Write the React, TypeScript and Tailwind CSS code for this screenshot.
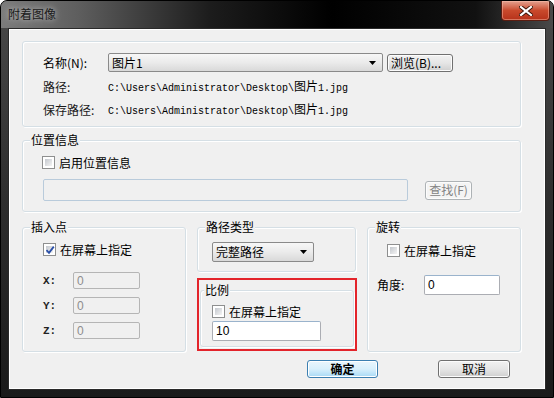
import React from 'react';

const CJK = '"Noto Sans CJK SC", "Liberation Sans", sans-serif';

const GroupBox: React.FC<{
  title?: string;
  className?: string;
  titleLeft?: string;
  children?: React.ReactNode;
}> = ({ title, className = '', titleLeft = 'left-[7px]', children }) => (
  <div
    className={`relative border border-[#d5dfe5] rounded-[3px] shadow-[inset_1px_1px_0_#ffffff,1px_1px_0_#ffffff] ${className}`}
  >
    {title && (
      <span className={`absolute -top-[8px] ${titleLeft} px-[1px] bg-[#f0f0f0] text-[12px] leading-[14px] text-black`}>
        {title}
      </span>
    )}
    {children}
  </div>
);

const CheckBox: React.FC<{ checked?: boolean; label: string }> = ({ checked, label }) => (
  <div className="flex items-center h-[13px]">
    <span className="w-[13px] h-[13px] border border-[#8e8f8f] bg-white p-[2px] flex-shrink-0 relative">
      <span className="block w-full h-full bg-gradient-to-br from-[#c4c8ce] to-[#f4f4f4]" />
      {checked && (
        <svg className="absolute left-[1px] top-[1px]" width="10" height="10" viewBox="0 0 10 10">
          <path d="M1.5 5.2 L4 7.8 L8.8 1.6" fill="none" stroke="#2a4fa8" strokeWidth="1.8" />
        </svg>
      )}
    </span>
    <span className="ml-[4px] text-[12px] leading-[14px] text-black whitespace-nowrap">{label}</span>
  </div>
);

const Arrow = () => (
  <svg width="7" height="4" viewBox="0 0 7 4" className="flex-shrink-0">
    <path d="M0 0 H7 L3.5 4 Z" fill="#000" />
  </svg>
);

const Combo: React.FC<{ value: string; className?: string }> = ({ value, className = '' }) => (
  <div
    className={`flex items-center justify-between pl-[3px] pr-[6px] border border-[#8a8a8a] rounded-[2px] bg-gradient-to-b from-[#f7f7f7] via-[#ebebeb] to-[#d9d9d9] ${className}`}
  >
    <span className="text-[12px] leading-[14px] text-black">{value}</span>
    <Arrow />
  </div>
);

const Btn: React.FC<{ label: string; className?: string; disabled?: boolean; primary?: boolean }> = ({
  label,
  className = '',
  disabled,
  primary,
}) => (
  <div
    className={`flex items-center justify-center rounded-[3px] border text-[12px] leading-[14px] ${
      primary
        ? 'border-[#3c7fb1] bg-gradient-to-b from-[#eaf6fd] via-[#d9f0fc] to-[#a7d9f5] text-black font-bold shadow-[inset_0_0_0_1px_#ffffff]'
        : disabled
        ? 'border-[#adb2b5] bg-[#f4f4f4] text-[#838383] shadow-[inset_0_0_0_1px_#fcfcfc]'
        : 'border-[#707070] bg-gradient-to-b from-[#f2f2f2] via-[#e6e6e6] to-[#cfcfcf] text-black shadow-[inset_0_0_0_1px_#fcfcfc]'
    } ${className}`}
  >
    {label}
  </div>
);

const TextBox: React.FC<{ value?: string; className?: string; disabled?: boolean }> = ({
  value,
  className = '',
  disabled,
}) => (
  <div
    className={`flex items-center pl-[3px] border rounded-[2px] text-[12px] leading-[14px] ${
      disabled ? 'bg-[#f0f0f0] border-[#b5b5b5] text-[#8d8d8d]' : 'bg-white border-[#abadb3] border-t-[#9ab3cc] text-black'
    } ${className}`}
    style={{ fontFamily: '"Liberation Sans", sans-serif' }}
  >
    {value}
  </div>
);

const PathText: React.FC<{ prefix: string }> = ({ prefix }) => (
  <span className="text-[10px] leading-[16px] text-black whitespace-nowrap" style={{ fontFamily: '"Liberation Mono", monospace' }}>
    {prefix}
    <span className="text-[12px]" style={{ fontFamily: CJK }}>图片</span>
    1.jpg
  </span>
);

const App: React.FC = () => {
  return (
    <div
      className="w-[554px] h-[398px] rounded-t-[7px] border border-black bg-gradient-to-b from-[#4a4a4a] via-[#2e2e2e] to-[#1a1a1a] flex flex-col overflow-hidden"
      style={{ fontFamily: CJK }}
    >
      {/* Title bar */}
      <div className="h-[27px] flex-shrink-0 flex items-start justify-between bg-[linear-gradient(90deg,#7c7c7c_0%,#5e5e5e_14%,#1c1c1c_38%,#000000_60%,#111111_86%,#4a4a4a_100%)]">
        <span className="mt-[6px] ml-[7px] text-[12px] leading-[14px] text-[#1a1a1a] [text-shadow:0_0_6px_rgba(255,255,255,0.7)]">
          附着图像
        </span>
        <div className="mr-[3px] w-[49px] h-[20px] rounded-b-[4px] border border-t-0 border-[#5a1c10] bg-gradient-to-b from-[#e3a08f] via-[#c9492c] to-[#b6321a] shadow-[inset_0_0_0_1px_rgba(255,200,180,0.45)] flex items-center justify-center">
          <svg width="14" height="10" viewBox="0 0 14 10">
            <path d="M2 1 L12 9 M12 1 L2 9" stroke="#3a1408" strokeWidth="4" strokeLinecap="square" />
            <path d="M2 1 L12 9 M12 1 L2 9" stroke="#ffffff" strokeWidth="2.2" strokeLinecap="square" />
          </svg>
        </div>
      </div>

      {/* Client area */}
      <div className="flex-1 px-[7px] pb-[7px]">
        <div className="h-full border border-[#2a2a2a] bg-[#f0f0f0] shadow-[inset_0_0_0_1px_#ffffff] pl-[13px] pt-[12px] pr-[23px]">
          {/* Group 1 */}
          <GroupBox className="w-[499px] h-[86px] pl-[20px] pt-[11px]">
            <div className="flex items-center h-[19px]">
              <span className="w-[65px] text-[12px] leading-[14px] text-black">名称(N):</span>
              <Combo value="图片1" className="w-[275px] h-[19px]" />
              <Btn label="浏览(B)..." className="ml-[4px] w-[66px] h-[18px] justify-start pl-[3px]" />
            </div>
            <div className="flex items-center h-[16px] mt-[7px]">
              <span className="w-[65px] text-[12px] leading-[14px] text-[#1a1a1a]">路径:</span>
              <PathText prefix={'C:\\Users\\Administrator\\Desktop\\'} />
            </div>
            <div className="flex items-center h-[16px] mt-[7px]">
              <span className="w-[65px] text-[12px] leading-[14px] text-[#1a1a1a]">保存路径:</span>
              <PathText prefix={'C:\\Users\\Administrator\\Desktop\\'} />
            </div>
          </GroupBox>

          {/* Group 2 */}
          <GroupBox title="位置信息" className="mt-[13px] w-[499px] h-[72px] pl-[19px] pt-[15px]">
            <CheckBox label="启用位置信息" />
            <div className="flex items-center mt-[10px]">
              <TextBox disabled className="ml-[1px] w-[365px] h-[22px] border-[#b9cbdb]" />
              <Btn label="查找(F)" disabled className="ml-[17px] w-[47px] h-[19px]" />
            </div>
          </GroupBox>

          {/* Bottom groups */}
          <div className="flex items-start mt-[15px]">
            <GroupBox title="插入点" className="w-[164px] h-[125px] pl-[20px] pt-[15px]">
              <CheckBox checked label="在屏幕上指定" />
              {['X', 'Y', 'Z'].map((k, i) => (
                <div key={k} className={`flex items-center h-[17px] ${i === 0 ? 'mt-[16px]' : 'mt-[8px]'}`}>
                  <span
                    className="w-[30px] text-[11px] leading-[14px] font-bold text-[#222]"
                    style={{ fontFamily: '"Liberation Mono", monospace' }}
                  >
                    {k}:
                  </span>
                  <TextBox disabled value="0" className="w-[67px] h-[17px]" />
                </div>
              ))}
            </GroupBox>

            <div className="ml-[11px] w-[160px] flex flex-col">
              <GroupBox title="路径类型" className="w-[159px] h-[45px] pl-[14px] pt-[14px]">
                <Combo value="完整路径" className="w-[102px] h-[20px]" />
              </GroupBox>
              <div className="mt-[6px] w-[160px] h-[73px] border-2 border-[#e3242b] pt-[10px] px-[1px]">
                <GroupBox title="比例" titleLeft="left-[3px]" className="h-[57px] pl-[11px] pt-[14px]">
                  <CheckBox label="在屏幕上指定" />
                  <TextBox value="10" className="mt-[3px] w-[109px] h-[20px]" />
                </GroupBox>
              </div>
            </div>

            <GroupBox title="旋转" className="ml-[10px] w-[154px] h-[125px] pl-[9px] pt-[16px]">
              <div className="ml-[10px]">
                <CheckBox label="在屏幕上指定" />
              </div>
              <div className="flex items-center mt-[18px] h-[20px]">
                <span className="w-[47px] text-[12px] leading-[14px] text-black">角度:</span>
                <TextBox value="0" className="w-[76px] h-[20px]" />
              </div>
            </GroupBox>
          </div>

          {/* Buttons */}
          <div className="flex justify-end mt-[8px] pr-[12px]">
            <Btn label="确定" primary className="w-[71px] h-[18px]" />
            <Btn label="取消" className="ml-[60px] w-[72px] h-[18px]" />
          </div>
        </div>
      </div>
    </div>
  );
};

export default App;
